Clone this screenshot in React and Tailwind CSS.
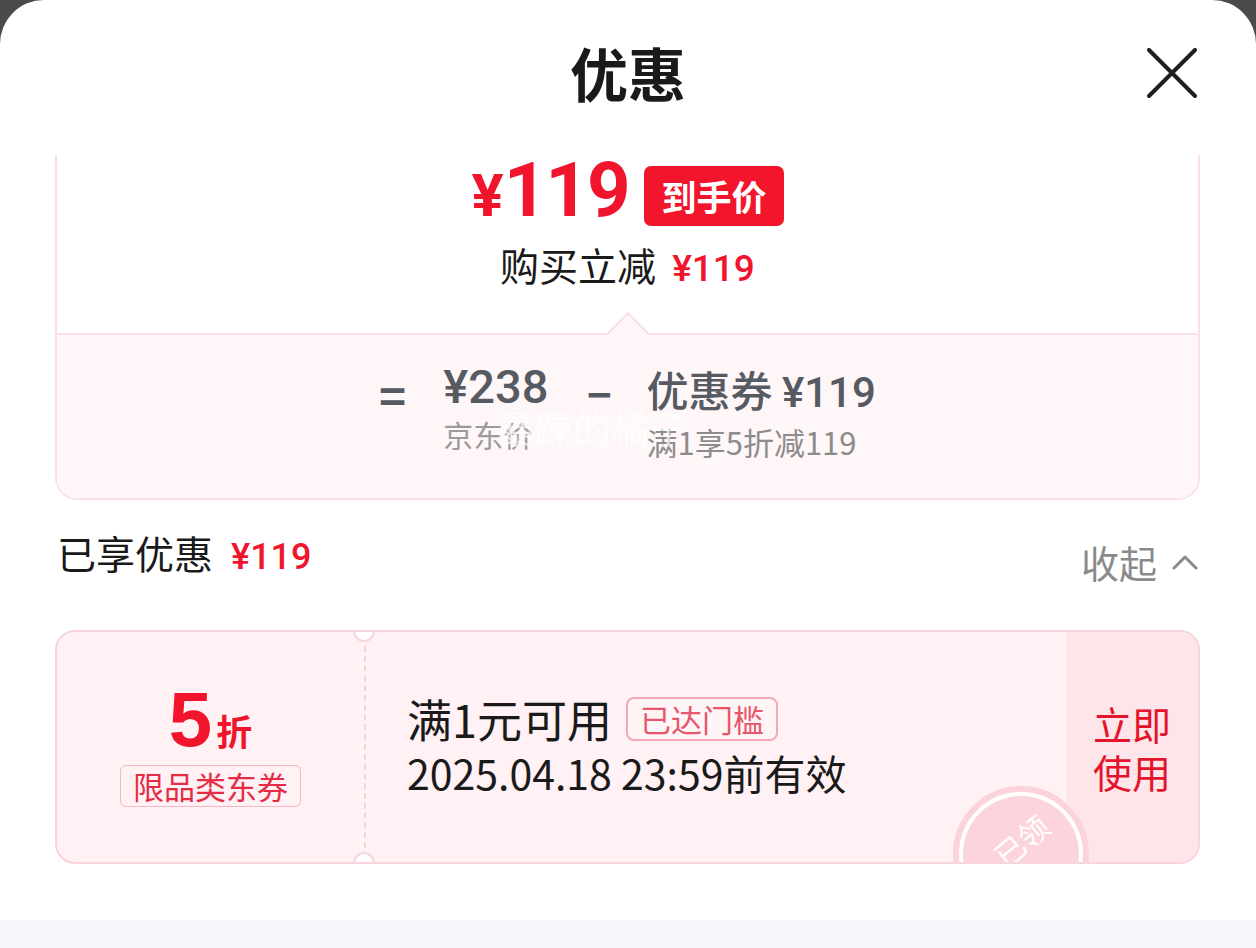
import React from "react";

const RED = "text-[#f0142d]";

const CloseIcon = () => (
  <svg width="50" height="50" viewBox="0 0 50 50" fill="none">
    <path d="M2 2 L48 48 M48 2 L2 48" stroke="#1f1f1f" strokeWidth="4" strokeLinecap="round" />
  </svg>
);

const ChevronUp = () => (
  <svg width="28" height="18" viewBox="0 0 28 18" fill="none">
    <path d="M3 15 L14 4 L25 15" stroke="#8a8a8a" strokeWidth="3" strokeLinecap="round" strokeLinejoin="round" />
  </svg>
);

const PriceCard = () => (
  <div className="mx-[55px] w-[1145px] border-x-2 border-b-2 border-[#fbe1e5] rounded-b-[22px] overflow-hidden">
    <div className="h-[178px] flex flex-col items-center">
      <div className="mt-[2px] flex items-center gap-[16px] h-[72px]">
        <div className={`flex items-baseline font-bold ${RED} font-['Roboto','Noto_Sans_CJK_SC',sans-serif]`}>
          <span className="text-[60px] leading-[72px]">¥</span>
          <span className="text-[76px] leading-[72px] tracking-[-2px]">119</span>
        </div>
        <div className="mt-[6px] h-[60px] px-[17px] rounded-[7px] bg-[#f2152b] flex items-center text-white text-[35px] font-bold">
          到手价
        </div>
      </div>
      <div className="mt-[13px] flex items-baseline gap-[16px] leading-[44px]">
        <span className="text-[39px] text-[#1a1a1a]">购买立减</span>
        <span className={`text-[37px] font-medium ${RED} font-['Roboto','Noto_Sans_CJK_SC',sans-serif]`}>¥119</span>
      </div>
    </div>
    <div className="relative h-[165px] bg-[#fff6f7] border-t-2 border-[#fbe1e5]">
      <div className="absolute left-1/2 -translate-x-1/2 top-[-17px] w-[30px] h-[30px] rotate-45 bg-[#fff6f7] border-l-2 border-t-2 border-[#fbe1e5]" />
      <div className="pt-[26px] flex justify-center text-[#555a63]">
        <div className="mt-[8px] text-[46px] font-bold leading-[50px]">=</div>
        <div className="ml-[37px] flex flex-col">
          <span className="text-[47px] font-medium leading-[52px] font-['Roboto','Noto_Sans_CJK_SC',sans-serif]">¥238</span>
          <span className="mt-[2px] text-[30px] leading-[38px] text-[#9b9b9b]">京东价</span>
        </div>
        <div className="ml-[38px] mt-[2px] text-[48px] font-bold leading-[50px]">–</div>
        <div className="ml-[34px] flex flex-col">
          <span className="text-[42px] font-medium leading-[56px]">优惠券 <span className="font-['Roboto','Noto_Sans_CJK_SC',sans-serif]">¥119</span></span>
          <span className="mt-[2px] text-[31px] leading-[38px] text-[#8c8c8c]">满1享5折减119</span>
        </div>
      </div>
      <div className="absolute left-[440px] top-[70px] text-[38px] leading-[44px] text-white/70">暴躁的橘子</div>
    </div>
  </div>
);

const Coupon = () => (
  <div className="mx-[55px] mt-[46px] w-[1145px] h-[234px] relative flex border-2 border-[#f8d5dc] rounded-[20px] bg-[#fff1f4] overflow-hidden">
    <div className="w-[307px] flex flex-col items-center justify-center pb-[6px]">
      <div className={`flex items-baseline font-bold ${RED}`}>
        <span className="text-[78px] leading-[76px] font-['Liberation_Sans',sans-serif] font-black">5</span>
        <span className="ml-[4px] text-[36px] leading-[40px]">折</span>
      </div>
      <div className="mt-[8px] px-[12px] h-[42px] flex items-center border border-[#f2b9c2] rounded-[6px] text-[31px] text-[#e42d45]">
        限品类东券
      </div>
    </div>
    <div className="absolute left-[296px] top-[-12px] w-[22px] h-[22px] rounded-full bg-white border-2 border-[#f8d5dc]" />
    <div className="absolute left-[296px] bottom-[-12px] w-[22px] h-[22px] rounded-full bg-white border-2 border-[#f8d5dc]" />
    <div className="my-[14px] border-l-2 border-dashed border-[#f6d3d9]" />
    <div className="flex-1 pl-[41px] flex flex-col justify-center pb-[4px]">
      <div className="flex items-center gap-[14px]">
        <span className="text-[45px] leading-[52px] text-[#1a1a1a]">满1元可用</span>
        <span className="h-[44px] px-[12px] flex items-center border-2 border-[#f3aab6] rounded-[8px] text-[31px] text-[#e8566b] bg-[#fff5f7]">已达门槛</span>
      </div>
      <div className="mt-[2px] text-[41px] leading-[50px] text-[#1a1a1a]">2025.04.18 23:59前有效</div>
    </div>
    <div className="absolute left-[896px] top-[154px] w-[136px] h-[136px] rounded-full border-[6px] border-[#fbd3da] bg-white p-[4px]">
      <div className="w-full h-full rounded-full bg-[#fcd5dc] flex items-center justify-center">
        <span className="text-[30px] leading-[34px] text-white -rotate-[40deg] -translate-y-[14px]">已领</span>
      </div>
    </div>
    <div className="w-[132px] bg-[#fde5ea] flex flex-col items-center justify-center text-[39px] leading-[48px] text-[#e4142c]">
      <span>立即</span>
      <span>使用</span>
    </div>
  </div>
);

export default function App() {
  return (
    <div className="w-[1256px] h-[948px] bg-[#4b4b4b] overflow-hidden font-['Noto_Sans_CJK_SC',sans-serif]">
      <div className="h-full bg-white rounded-t-[44px] flex flex-col">
        <header className="h-[155px] shrink-0 grid grid-cols-[1fr_auto_1fr] items-start pt-[36px] px-[59px]">
          <div />
          <h1 className="text-[58px] font-bold leading-[72px] text-[#1a1a1a]">优惠</h1>
          <div className="flex justify-end pt-[12px]">
            <CloseIcon />
          </div>
        </header>
        <PriceCard />
        <div className="mx-[57px] mt-[30px] flex justify-between">
          <div className="flex items-baseline gap-[18px] leading-[44px]">
            <span className="text-[39px] text-[#1a1a1a]">已享优惠</span>
            <span className={`text-[36px] font-medium ${RED} font-['Roboto','Noto_Sans_CJK_SC',sans-serif]`}>¥119</span>
          </div>
          <div className="mt-[10px] flex items-center gap-[14px]">
            <span className="text-[38px] leading-[44px] text-[#8a8a8a]">收起</span>
            <ChevronUp />
          </div>
        </div>
        <Coupon />
        <div className="flex-1" />
        <div className="h-[28px] shrink-0 bg-[#f5f7fa]" />
      </div>
    </div>
  );
}
